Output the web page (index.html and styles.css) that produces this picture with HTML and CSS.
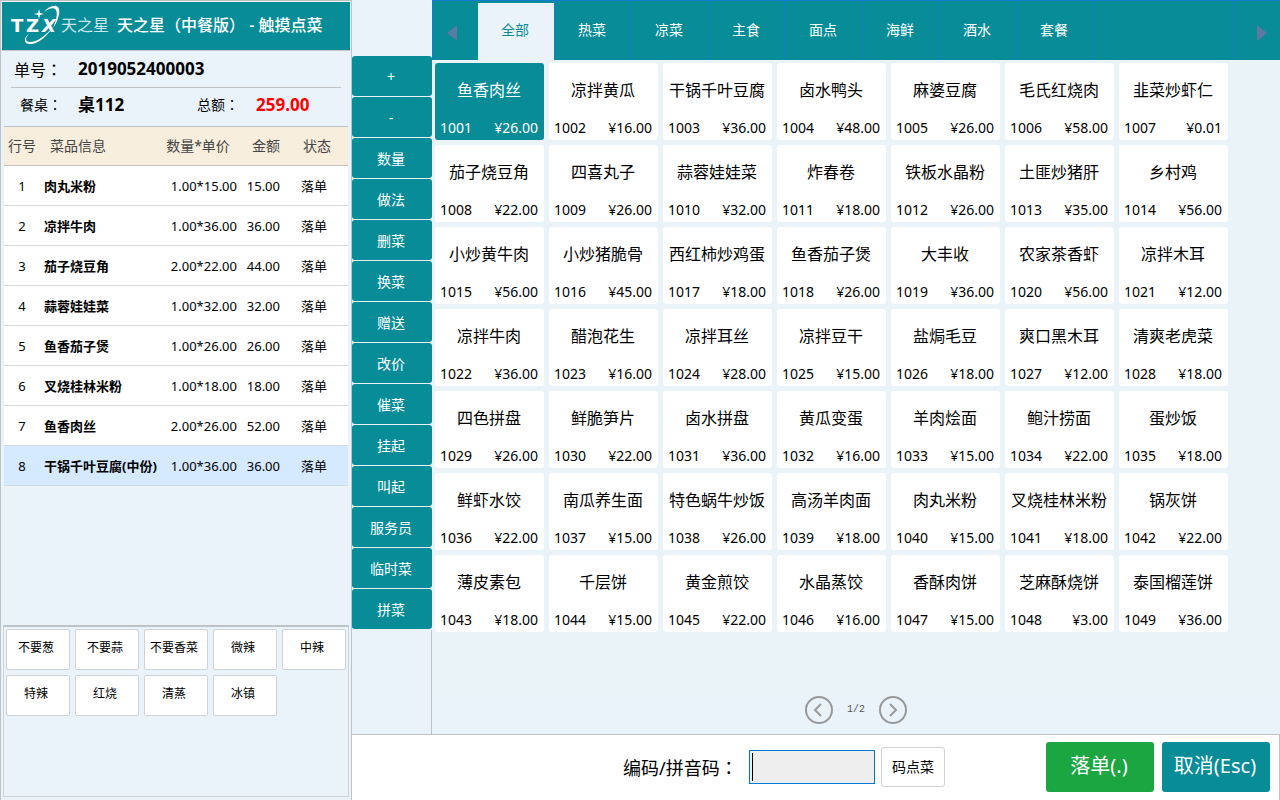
FILE: index.html
```html
<!DOCTYPE html>
<html lang="zh-CN">
<head>
<meta charset="utf-8">
<meta name="viewport" content="width=device-width, initial-scale=1">
<title>天之星（中餐版） - 触摸点菜</title>
<link rel="stylesheet" href="styles.css">
</head>
<body>
<div class="app">
  <aside class="order">
    <header class="brand">
      <svg class="logo" width="100" height="44" viewBox="0 0 100 44" role="img" aria-label="TZX 天之星">
        <text class="logo-mark" x="1" y="28">T</text>
        <text class="logo-mark" x="16" y="28">Z</text>
        <text class="logo-mark slanted" x="32" y="28">X</text>
        <path d="M34 8C38 3 43 1 46 2C50 3 50 9 48 14C47 18 45 21 43 24C46 17 48 10 46 6C44 3 39 4 34 8Z" fill="#fff"/>
        <path d="M19 30C15 34 15 38 20 38C27 38 35 32 42 24C36 34 26 41 19 40C13 39 14 33 19 30Z" fill="#fff"/>
        <path d="M29 5L30 9L34 10L30 11L29 15L28 11L24 10L28 9Z" fill="#fff"/>
        <text class="logo-name" x="51" y="27">天之星</text>
      </svg>
      <h1 class="title">天之星（中餐版） - 触摸点菜</h1>
    </header>
    <section class="summary">
      <div class="bill"><span class="bill-label">单号<span class="colon" lang="zh-TW">：</span></span><strong>2019052400003</strong></div>
      <div class="seat">
        <span class="seat-label">餐桌<span class="colon" lang="zh-TW">：</span></span><strong class="seat-value">桌112</strong>
        <span class="total-label">总额<span class="colon" lang="zh-TW">：</span></span><strong class="total">259.00</strong>
      </div>
    </section>
    <div class="lines">
      <table class="line-table">
        <colgroup><col class="col-no"><col class="col-name"><col class="col-qty"><col class="col-sum"><col class="col-state"></colgroup>
        <thead><tr><th>行号</th><th class="head-name">菜品信息</th><th class="head-qty">数量*单价</th><th class="num">金额</th><th class="head-state">状态</th></tr></thead>
        <tbody>
          <tr><td>1</td><td class="name">肉丸米粉</td><td class="num">1.00*15.00</td><td class="num">15.00</td><td>落单</td></tr>
          <tr><td>2</td><td class="name">凉拌牛肉</td><td class="num">1.00*36.00</td><td class="num">36.00</td><td>落单</td></tr>
          <tr><td>3</td><td class="name">茄子烧豆角</td><td class="num">2.00*22.00</td><td class="num">44.00</td><td>落单</td></tr>
          <tr><td>4</td><td class="name">蒜蓉娃娃菜</td><td class="num">1.00*32.00</td><td class="num">32.00</td><td>落单</td></tr>
          <tr><td>5</td><td class="name">鱼香茄子煲</td><td class="num">1.00*26.00</td><td class="num">26.00</td><td>落单</td></tr>
          <tr><td>6</td><td class="name">叉烧桂林米粉</td><td class="num">1.00*18.00</td><td class="num">18.00</td><td>落单</td></tr>
          <tr><td>7</td><td class="name">鱼香肉丝</td><td class="num">2.00*26.00</td><td class="num">52.00</td><td>落单</td></tr>
          <tr class="current"><td>8</td><td class="name">干锅千叶豆腐(中份)</td><td class="num">1.00*36.00</td><td class="num">36.00</td><td>落单</td></tr>
        </tbody>
      </table>
    </div>
    <section class="tastes">
      <button class="taste">不要葱</button><button class="taste">不要蒜</button><button class="taste">不要香菜</button><button class="taste">微辣</button><button class="taste">中辣</button><button class="taste">特辣</button><button class="taste">红烧</button><button class="taste">清蒸</button><button class="taste">冰镇</button>
    </section>
  </aside>

  <div class="actions">
    <button class="action">+</button>
    <button class="action">-</button>
    <button class="action">数量</button>
    <button class="action">做法</button>
    <button class="action">删菜</button>
    <button class="action">换菜</button>
    <button class="action">赠送</button>
    <button class="action">改价</button>
    <button class="action">催菜</button>
    <button class="action">挂起</button>
    <button class="action">叫起</button>
    <button class="action">服务员</button>
    <button class="action">临时菜</button>
    <button class="action">拼菜</button>
    <div class="actions-rest"></div>
  </div>

  <main class="menu">
    <nav class="tabs">
      <button class="tab-arrow" aria-label="向左"><svg width="12" height="16" viewBox="0 0 12 16"><path d="M11 0V16L1 8Z" fill="#5b7aa2"/></svg></button>
      <button class="tab active">全部</button>
      <button class="tab">热菜</button>
      <button class="tab">凉菜</button>
      <button class="tab">主食</button>
      <button class="tab">面点</button>
      <button class="tab">海鲜</button>
      <button class="tab">酒水</button>
      <button class="tab">套餐</button>
      <button class="tab-arrow last" aria-label="向右"><svg width="12" height="16" viewBox="0 0 12 16"><path d="M1 0V16L11 8Z" fill="#5b7aa2"/></svg></button>
    </nav>
    <div class="dishes">
      <button class="dish selected"><span class="dish-name">鱼香肉丝</span><span>1001</span><span>¥26.00</span></button>
      <button class="dish"><span class="dish-name">凉拌黄瓜</span><span>1002</span><span>¥16.00</span></button>
      <button class="dish"><span class="dish-name">干锅千叶豆腐</span><span>1003</span><span>¥36.00</span></button>
      <button class="dish"><span class="dish-name">卤水鸭头</span><span>1004</span><span>¥48.00</span></button>
      <button class="dish"><span class="dish-name">麻婆豆腐</span><span>1005</span><span>¥26.00</span></button>
      <button class="dish"><span class="dish-name">毛氏红烧肉</span><span>1006</span><span>¥58.00</span></button>
      <button class="dish"><span class="dish-name">韭菜炒虾仁</span><span>1007</span><span>¥0.01</span></button>
      <button class="dish"><span class="dish-name">茄子烧豆角</span><span>1008</span><span>¥22.00</span></button>
      <button class="dish"><span class="dish-name">四喜丸子</span><span>1009</span><span>¥26.00</span></button>
      <button class="dish"><span class="dish-name">蒜蓉娃娃菜</span><span>1010</span><span>¥32.00</span></button>
      <button class="dish"><span class="dish-name">炸春卷</span><span>1011</span><span>¥18.00</span></button>
      <button class="dish"><span class="dish-name">铁板水晶粉</span><span>1012</span><span>¥26.00</span></button>
      <button class="dish"><span class="dish-name">土匪炒猪肝</span><span>1013</span><span>¥35.00</span></button>
      <button class="dish"><span class="dish-name">乡村鸡</span><span>1014</span><span>¥56.00</span></button>
      <button class="dish"><span class="dish-name">小炒黄牛肉</span><span>1015</span><span>¥56.00</span></button>
      <button class="dish"><span class="dish-name">小炒猪脆骨</span><span>1016</span><span>¥45.00</span></button>
      <button class="dish"><span class="dish-name">西红柿炒鸡蛋</span><span>1017</span><span>¥18.00</span></button>
      <button class="dish"><span class="dish-name">鱼香茄子煲</span><span>1018</span><span>¥26.00</span></button>
      <button class="dish"><span class="dish-name">大丰收</span><span>1019</span><span>¥36.00</span></button>
      <button class="dish"><span class="dish-name">农家茶香虾</span><span>1020</span><span>¥56.00</span></button>
      <button class="dish"><span class="dish-name">凉拌木耳</span><span>1021</span><span>¥12.00</span></button>
      <button class="dish"><span class="dish-name">凉拌牛肉</span><span>1022</span><span>¥36.00</span></button>
      <button class="dish"><span class="dish-name">醋泡花生</span><span>1023</span><span>¥16.00</span></button>
      <button class="dish"><span class="dish-name">凉拌耳丝</span><span>1024</span><span>¥28.00</span></button>
      <button class="dish"><span class="dish-name">凉拌豆干</span><span>1025</span><span>¥15.00</span></button>
      <button class="dish"><span class="dish-name">盐焗毛豆</span><span>1026</span><span>¥18.00</span></button>
      <button class="dish"><span class="dish-name">爽口黑木耳</span><span>1027</span><span>¥12.00</span></button>
      <button class="dish"><span class="dish-name">清爽老虎菜</span><span>1028</span><span>¥18.00</span></button>
      <button class="dish"><span class="dish-name">四色拼盘</span><span>1029</span><span>¥26.00</span></button>
      <button class="dish"><span class="dish-name">鲜脆笋片</span><span>1030</span><span>¥22.00</span></button>
      <button class="dish"><span class="dish-name">卤水拼盘</span><span>1031</span><span>¥36.00</span></button>
      <button class="dish"><span class="dish-name">黄瓜变蛋</span><span>1032</span><span>¥16.00</span></button>
      <button class="dish"><span class="dish-name">羊肉烩面</span><span>1033</span><span>¥15.00</span></button>
      <button class="dish"><span class="dish-name">鲍汁捞面</span><span>1034</span><span>¥22.00</span></button>
      <button class="dish"><span class="dish-name">蛋炒饭</span><span>1035</span><span>¥18.00</span></button>
      <button class="dish"><span class="dish-name">鲜虾水饺</span><span>1036</span><span>¥22.00</span></button>
      <button class="dish"><span class="dish-name">南瓜养生面</span><span>1037</span><span>¥15.00</span></button>
      <button class="dish"><span class="dish-name">特色蜗牛炒饭</span><span>1038</span><span>¥26.00</span></button>
      <button class="dish"><span class="dish-name">高汤羊肉面</span><span>1039</span><span>¥18.00</span></button>
      <button class="dish"><span class="dish-name">肉丸米粉</span><span>1040</span><span>¥15.00</span></button>
      <button class="dish"><span class="dish-name">叉烧桂林米粉</span><span>1041</span><span>¥18.00</span></button>
      <button class="dish"><span class="dish-name">锅灰饼</span><span>1042</span><span>¥22.00</span></button>
      <button class="dish"><span class="dish-name">薄皮素包</span><span>1043</span><span>¥18.00</span></button>
      <button class="dish"><span class="dish-name">千层饼</span><span>1044</span><span>¥15.00</span></button>
      <button class="dish"><span class="dish-name">黄金煎饺</span><span>1045</span><span>¥22.00</span></button>
      <button class="dish"><span class="dish-name">水晶蒸饺</span><span>1046</span><span>¥16.00</span></button>
      <button class="dish"><span class="dish-name">香酥肉饼</span><span>1047</span><span>¥15.00</span></button>
      <button class="dish"><span class="dish-name">芝麻酥烧饼</span><span>1048</span><span>¥3.00</span></button>
      <button class="dish"><span class="dish-name">泰国榴莲饼</span><span>1049</span><span>¥36.00</span></button>
    </div>
    <div class="pager">
      <button class="pager-button" aria-label="上一页"><svg width="28" height="28" viewBox="0 0 28 28" fill="none" stroke="#999" stroke-width="2"><circle cx="14" cy="14" r="13"/><path d="M16 8L10 14L16 20"/></svg></button>
      <span class="pager-text">1/2</span>
      <button class="pager-button" aria-label="下一页"><svg width="28" height="28" viewBox="0 0 28 28" fill="none" stroke="#999" stroke-width="2"><circle cx="14" cy="14" r="13"/><path d="M11 8L17 14L11 20"/></svg></button>
    </div>
  </main>

  <footer class="bar">
    <div class="lookup">
      <label class="lookup-label" for="code">编码/拼音码<span class="colon" lang="zh-TW">：</span></label>
      <input class="lookup-input" id="code" type="text">
      <button class="lookup-button">码点菜</button>
    </div>
    <button class="big submit">落单(.)</button>
    <button class="big">取消(Esc)</button>
  </footer>
</div>
</body>
</html>
```

FILE: styles.css
```css
* { box-sizing: border-box; }
body {
  margin: 0;
  background: #ebf3fa;
  color: #000;
  font: 14px/20px "Noto Sans", "Noto Sans CJK SC", sans-serif;
}
button {
  margin: 0;
  padding: 0;
  border: 0;
  font: inherit;
  color: inherit;
  white-space: nowrap;
  cursor: pointer;
}
svg { display: block; }
.colon { font-family: "Noto Sans CJK TC", sans-serif; }

.app {
  display: grid;
  grid-template-columns: 352px 80px minmax(0, 1fr);
  grid-template-rows: 1fr auto;
  min-height: 100vh;
}

/* Order panel */
.order {
  grid-row: 1 / 3;
  display: flex;
  flex-direction: column;
  padding: 1px 1px 3px;
  border: 1px solid #bfc3c6;
  border-width: 1px 1px 0 1px;
}
.brand {
  display: flex;
  align-items: center;
  gap: 7px;
  height: 49px;
  padding-left: 8px;
  background: #078c98;
  border-bottom: 1px solid #b9c5c9;
}
.logo-mark { font: bold 18px "DejaVu Sans", sans-serif; fill: #fff; }
.slanted { font-style: oblique; }
.logo-name { font: 16px "Noto Sans CJK SC", sans-serif; fill: #c9e6e9; }
.title { margin: 0; padding-bottom: 2px; font-size: 16px; line-height: 24px; font-weight: 500; color: #fff; white-space: nowrap; }

.summary { padding: 0 9px; height: 75px; }
.bill {
  display: flex;
  align-items: center;
  height: 37px;
  padding-left: 3px;
  border-bottom: 1px solid #bfc3c6;
  font-size: 16px;
}
.bill-label { width: 64px; }
.bill strong, .seat-value, .total { font-size: 17px; }
.seat { display: flex; align-items: center; height: 33px; padding-left: 9px; }
.seat-label { width: 58px; }
.seat-value { width: 119px; }
.total-label { width: 59px; }
.total { color: #f00; }

.lines { flex: 1; padding: 0 2px; }
.line-table { width: 100%; table-layout: fixed; border-collapse: separate; border-spacing: 0; font-size: 13px; text-align: center; }
.line-table th, .line-table td { height: 40px; padding: 0; border-bottom: 1px solid #d6dadc; white-space: nowrap; }
.line-table th {
  border-top: 1px solid #bfc3c6;
  border-bottom-color: #bfc3c6;
  background: #f8eedd;
  color: #444;
  font-size: 14px;
  font-weight: 400;
}
.line-table tbody { background: #fff; }
.line-table .current { background: #d5e9ff; }
.line-table .name { padding-left: 4px; text-align: left; font-weight: 700; }
.line-table .head-name { padding-left: 10px; text-align: left; }
.line-table .head-qty { padding-right: 6px; }
.line-table .head-state { padding-left: 6px; }
.line-table .num { text-align: right; }
.col-no { width: 36px; }
.col-name { width: 125px; }
.col-qty { width: 72px; }
.col-sum { width: 43px; }

.tastes {
  display: grid;
  grid-template-columns: repeat(5, 64px);
  grid-auto-rows: 41px;
  gap: 5px;
  min-height: 172px;
  margin: 0 1px;
  padding: 2px;
  border: 1px solid #cfd3d6;
  border-top: 2px solid #bfc3c6;
}
.taste {
  padding: 0 4px 4px 0;
  border: 1px solid #cfd3d6;
  border-radius: 2px;
  background: #fff;
  font-size: 12px;
}

/* Actions */
.actions { display: flex; flex-direction: column; gap: 1px; padding-top: 56px; }
.action { height: 40px; padding: 2px 2px 0 0; border-radius: 3px; background: #078c98; color: #fff; }
.actions-rest { flex: 1; border-right: 1px solid #bfc3c6; }

/* Dish menu */
.menu { display: flex; flex-direction: column; }
.tabs { display: flex; height: 60px; background: #078c98; border-top: 1px solid #117dce; color: #fff; }
.tab { width: 77px; padding: 0 2px 2px 0; border-right: 1px solid #117dcc; background: none; }
.tab.active { margin-top: 2px; padding-bottom: 4px; background: #ebf3fa; color: #078c98; }
.tab-arrow { display: grid; place-items: center; width: 46px; padding-top: 5px; padding-right: 8px; border-left: 1px solid #117dcc; background: none; }
.tab-arrow.last { width: 45px; margin-left: auto; padding: 5px 0 0 8px; }
.dishes {
  flex: 1;
  display: grid;
  grid-template-columns: repeat(auto-fill, 109px);
  grid-auto-rows: 77px;
  gap: 5px;
  padding: 3px;
  background: #e9f3f8;
}
.dish {
  display: flex;
  flex-wrap: wrap;
  justify-content: space-between;
  align-content: space-between;
  padding: 17px 6px 2px 5px;
  border-radius: 3px;
  background: #fff;
}
.dish-name { flex: 0 0 100%; font-size: 16px; }
.dish.selected { background: #078c98; color: #fff; }
.pager { display: flex; justify-content: center; align-items: center; padding-bottom: 10px; }
.pager-button { background: none; }
.pager-text { width: 46px; text-align: center; color: #555; font: 10px/20px "Liberation Mono", monospace; }

/* Bottom bar */
.bar {
  grid-column: 2 / 4;
  display: flex;
  align-items: center;
  justify-content: flex-end;
  gap: 8px;
  min-height: 66px;
  padding: 0 9px 1px 0;
  border: 1px solid #bfc3c6;
  border-width: 1px 1px 0 0;
  background: #fff;
}
.lookup { display: flex; align-items: center; gap: 6px; margin-right: 93px; }
.lookup-label { width: 120px; font-size: 18px; white-space: nowrap; }
.lookup-input {
  width: 126px;
  height: 34px;
  padding: 0 4px;
  border: 1px solid #0078d7;
  outline: 0;
  background: linear-gradient(#000, #000) 2px 2px / 1px 28px no-repeat, #eee;
  font: inherit;
}
.lookup-button { width: 64px; height: 40px; border: 1px solid #cfd1d3; border-radius: 3px; background: #fff; }
.big { width: 108px; height: 50px; padding: 0 2px 2px 0; border-radius: 3px; background: #078c98; color: #fff; font-size: 20px; }
.submit { background: #1ba641; }
```
